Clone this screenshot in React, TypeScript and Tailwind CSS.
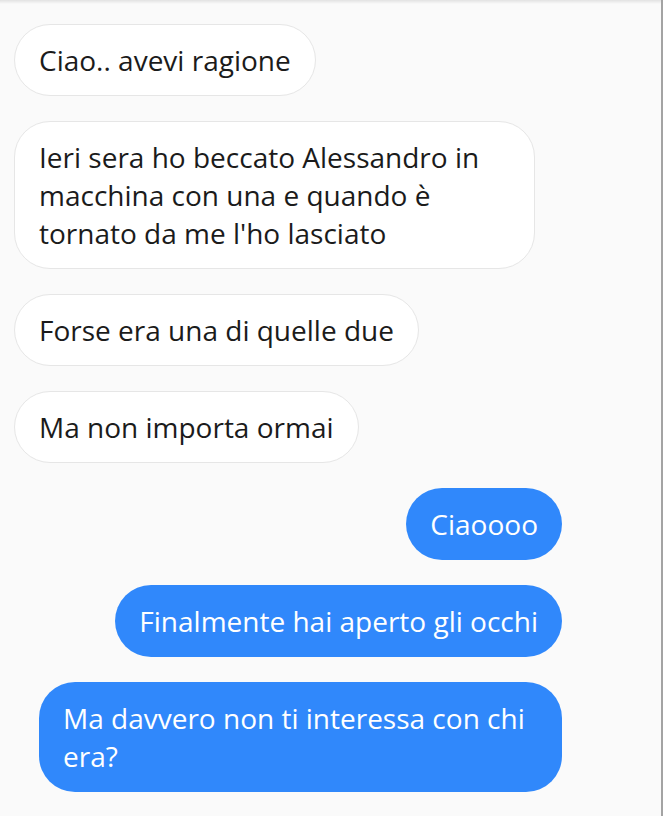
const messages = [
  { id: 1, text: "Ciao.. avevi ragione", mine: false },
  {
    id: 2,
    text: "Ieri sera ho beccato Alessandro in macchina con una e quando è tornato da me l'ho lasciato",
    mine: false,
  },
  { id: 3, text: "Forse era una di quelle due", mine: false },
  { id: 4, text: "Ma non importa ormai", mine: false },
  { id: 5, text: "Ciaoooo", mine: true },
  { id: 6, text: "Finalmente hai aperto gli occhi", mine: true },
  { id: 7, text: "Ma davvero non ti interessa con chi era?", mine: true },
];

const App = () => {
  return (
    <div className="min-h-[816px] w-full bg-[#fafafa] border-r-2 border-[#a3a3a3] font-['Open_Sans',sans-serif]">
      <div className="h-[4px] bg-gradient-to-b from-[#e2e2e2] to-transparent" />
      <div className="flex w-[562px] flex-col gap-[25px] pl-[14px] pt-[20px] pb-[24px]">
        {messages.map((m) => (
          <div
            key={m.id}
            className={m.mine ? "flex justify-end" : "flex justify-start"}
          >
            <div
              className={
                m.mine
                  ? "max-w-[523px] rounded-[36px] bg-[#3088fb] px-[24px] py-[17px] text-[28px] leading-[38px] text-white"
                  : "max-w-[521px] rounded-[36px] border border-[#e6e6e6] bg-white px-[24px] py-[16px] text-[28px] leading-[38px] text-[#1b1b1b]"
              }
            >
              {m.text}
            </div>
          </div>
        ))}
      </div>
    </div>
  );
};

export default App;
